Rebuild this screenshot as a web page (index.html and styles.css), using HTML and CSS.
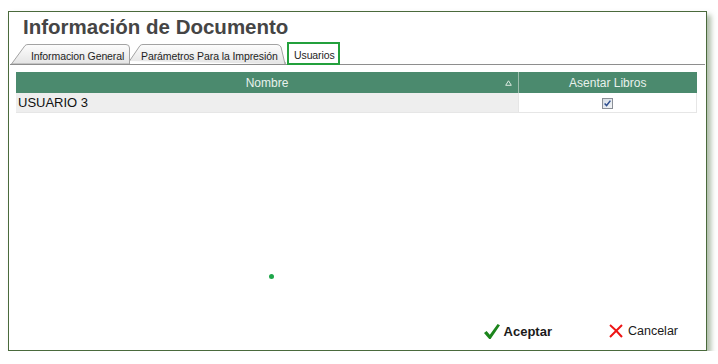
FILE: index.html
```html
<!DOCTYPE html>
<html lang="es">
<head>
    <title>Información de Documento</title>
    <meta charset="utf-8">
    <link rel="stylesheet" href="styles.css">
</head>
<body>

    <!-- Ventana de dialogo -->
    <div class="dialogo">
        <h1 class="titulo">Información de Documento</h1>

        <!-- Pestañas -->
        <div class="pestanas">
            <div class="pestana pestana-uno">
                <svg class="pestana-fondo" width="119" height="21" viewBox="0 0 119 21">
                    <defs>
                        <linearGradient id="gradPestana" x1="0" y1="0" x2="0" y2="1">
                            <stop offset="0" stop-color="#fdfdfd"/>
                            <stop offset="1" stop-color="#e4e4e4"/>
                        </linearGradient>
                    </defs>
                    <path d="M0.5,21 L14,2.6 Q15,1.5 17,1.5 L115,1.5 Q118.5,1.5 118.5,5 L118.5,21 Z" fill="url(#gradPestana)" stroke="#a3a3a3"/>
                </svg>
                <span class="pestana-texto">Informacion General</span>
            </div>
            <div class="pestana pestana-dos">
                <svg class="pestana-fondo" width="157" height="21" viewBox="0 0 157 21">
                    <path d="M0.5,18 L11,2.6 Q12,1.5 14,1.5 L148,1.5 Q150.5,1.5 152,4 L156,21" fill="url(#gradPestana)" stroke="#a3a3a3"/>
                    <path d="M156,21 L160,14" stroke="#a3a3a3" fill="none"/>
                </svg>
                <span class="pestana-texto">Parámetros Para la Impresión</span>
            </div>
            <div class="pestana pestana-activa">
                <span class="pestana-texto">Usuarios</span>
            </div>
        </div>

        <!-- Tabla de usuarios -->
        <table class="tabla">
            <thead>
                <tr>
                    <th class="col-nombre">
                        Nombre
                        <svg class="orden" width="7" height="6" viewBox="0 0 7 6">
                            <path d="M3.5,0.8 L6.3,5.3 L0.7,5.3 Z" fill="none" stroke="#dce9e2" stroke-width="1"/>
                        </svg>
                    </th>
                    <th class="col-libros">Asentar Libros</th>
                </tr>
            </thead>
            <tbody>
                <tr>
                    <td class="celda-nombre">USUARIO 3</td>
                    <td class="celda-check">
                        <svg width="11" height="11" viewBox="0 0 11 11">
                            <defs>
                                <linearGradient id="gradCheck" x1="0" y1="0" x2="1" y2="1">
                                    <stop offset="0" stop-color="#d4dbe4"/>
                                    <stop offset="1" stop-color="#f4f6f8"/>
                                </linearGradient>
                            </defs>
                            <rect x="0.5" y="0.5" width="10" height="10" fill="url(#gradCheck)" stroke="#8a8f96"/>
                            <path d="M2.6,5.4 L4.6,7.5 L8.4,2.6" fill="none" stroke="#2f4f8f" stroke-width="1.5"/>
                        </svg>
                    </td>
                </tr>
            </tbody>
        </table>

        <!-- indicador de carga -->
        <div class="punto"></div>

        <!-- Botones -->
        <div class="botones">
            <div class="boton boton-aceptar">
                <svg width="16" height="15" viewBox="0 0 16 15">
                    <path d="M0,9 L2.6,7 L5.8,10.8 L13.6,0 L16,1.2 L6.6,15 L5.2,15 Z" fill="#1c851c"/>
                </svg>
                <span>Aceptar</span>
            </div>
            <div class="boton boton-cancelar">
                <svg width="14" height="14" viewBox="0 0 14 14">
                    <path d="M1,1 Q7,6 13,13 M13,1 Q7,7 1,13" fill="none" stroke="#ee1515" stroke-width="2"/>
                </svg>
                <span>Cancelar</span>
            </div>
        </div>
    </div>

</body>
</html>
```

FILE: styles.css
```css
/* Hele siden */
body{
    margin: 0;
    background-color: #ffffff;
    font-family: "Liberation Sans", Arial, sans-serif;
}

.dialogo{ /* ventana principal */
    position: relative;
    box-sizing: border-box;
    width: 699px;
    height: 340px;
    margin: 11px 0 0 8px;
    border: 1px solid #4a6a3c;
    background-color: #ffffff;
    box-shadow: 4px 4px 5px rgba(95, 125, 85, 0.5);
    display: flex;
    flex-direction: column;
}

.titulo{
    margin: 3px 0 0 14px;
    font-size: 20.5px;
    line-height: 24px;
    font-weight: bold;
    color: #454545;
}

.pestanas{
    display: flex;
    align-items: flex-end;
    height: 21px;
    margin: 4px 1px 0 1px;
    padding-left: 1px;
    border-bottom: 1px solid #8e8e8e;
}

.pestana{
    position: relative;
    box-sizing: border-box;
    height: 21px;
    padding-top: 6px;
    font-size: 10.5px;
    letter-spacing: -0.1px;
    line-height: 15px;
    color: #1e1e1e;
    white-space: nowrap;
}

.pestana-fondo{
    position: absolute;
    left: 0;
    top: 0;
}

.pestana-texto{
    position: relative;
}

.pestana-uno{
    width: 118px;
    padding-left: 20px;
}

.pestana-dos{
    width: 156px;
    padding-left: 12px;
}

.pestana-activa{
    width: 53px;
    height: 23px;
    margin-left: 2px;
    margin-bottom: -1px;
    padding-top: 4px;
    padding-left: 5px;
    border: 2px solid #23a03c;
    background-color: #ffffff;
}

.tabla{
    width: 681px;
    margin: 7px 0 0 7px;
    border-collapse: collapse;
    table-layout: fixed;
}

.tabla th{
    height: 21px;
    padding: 0;
    background-color: #4b8a6e;
    color: #e8f1ec;
    font-size: 12px;
    font-weight: normal;
    text-align: center;
}

.col-nombre{
    position: relative;
    width: 502px;
}

.col-libros{
    border-left: 1px solid #9cbdad;
}

.orden{
    position: absolute;
    right: 6px;
    top: 8px;
}

.tabla td{
    height: 19px;
    padding: 0;
    border-bottom: 1px solid #e6e6e6;
}

.celda-nombre{
    padding-left: 2px !important;
    background-color: #eeeeee;
    font-size: 13px;
    color: #111111;
}

.celda-check{
    text-align: center;
    border-right: 1px solid #e6e6e6;
    border-left: 1px solid #e6e6e6;
}

.celda-check svg{
    display: block;
    margin: 1px auto 0 auto;
}

.punto{ /* punto verde de carga */
    position: absolute;
    left: 260px;
    top: 262px;
    width: 5px;
    height: 5px;
    border-radius: 50%;
    background-color: #1ea64a;
}

.botones{
    margin-top: auto;
    margin-bottom: 4px;
    height: 30px;
    display: flex;
    justify-content: flex-end;
    align-items: center;
    gap: 57px;
    padding-right: 28px;
}

.boton{
    display: flex;
    align-items: center;
    font-size: 13px;
    color: #1a1a1a;
}

.boton-aceptar{
    gap: 4px;
    font-weight: bold;
}

.boton-cancelar{
    gap: 5px;
    font-size: 12.5px;
}
```
